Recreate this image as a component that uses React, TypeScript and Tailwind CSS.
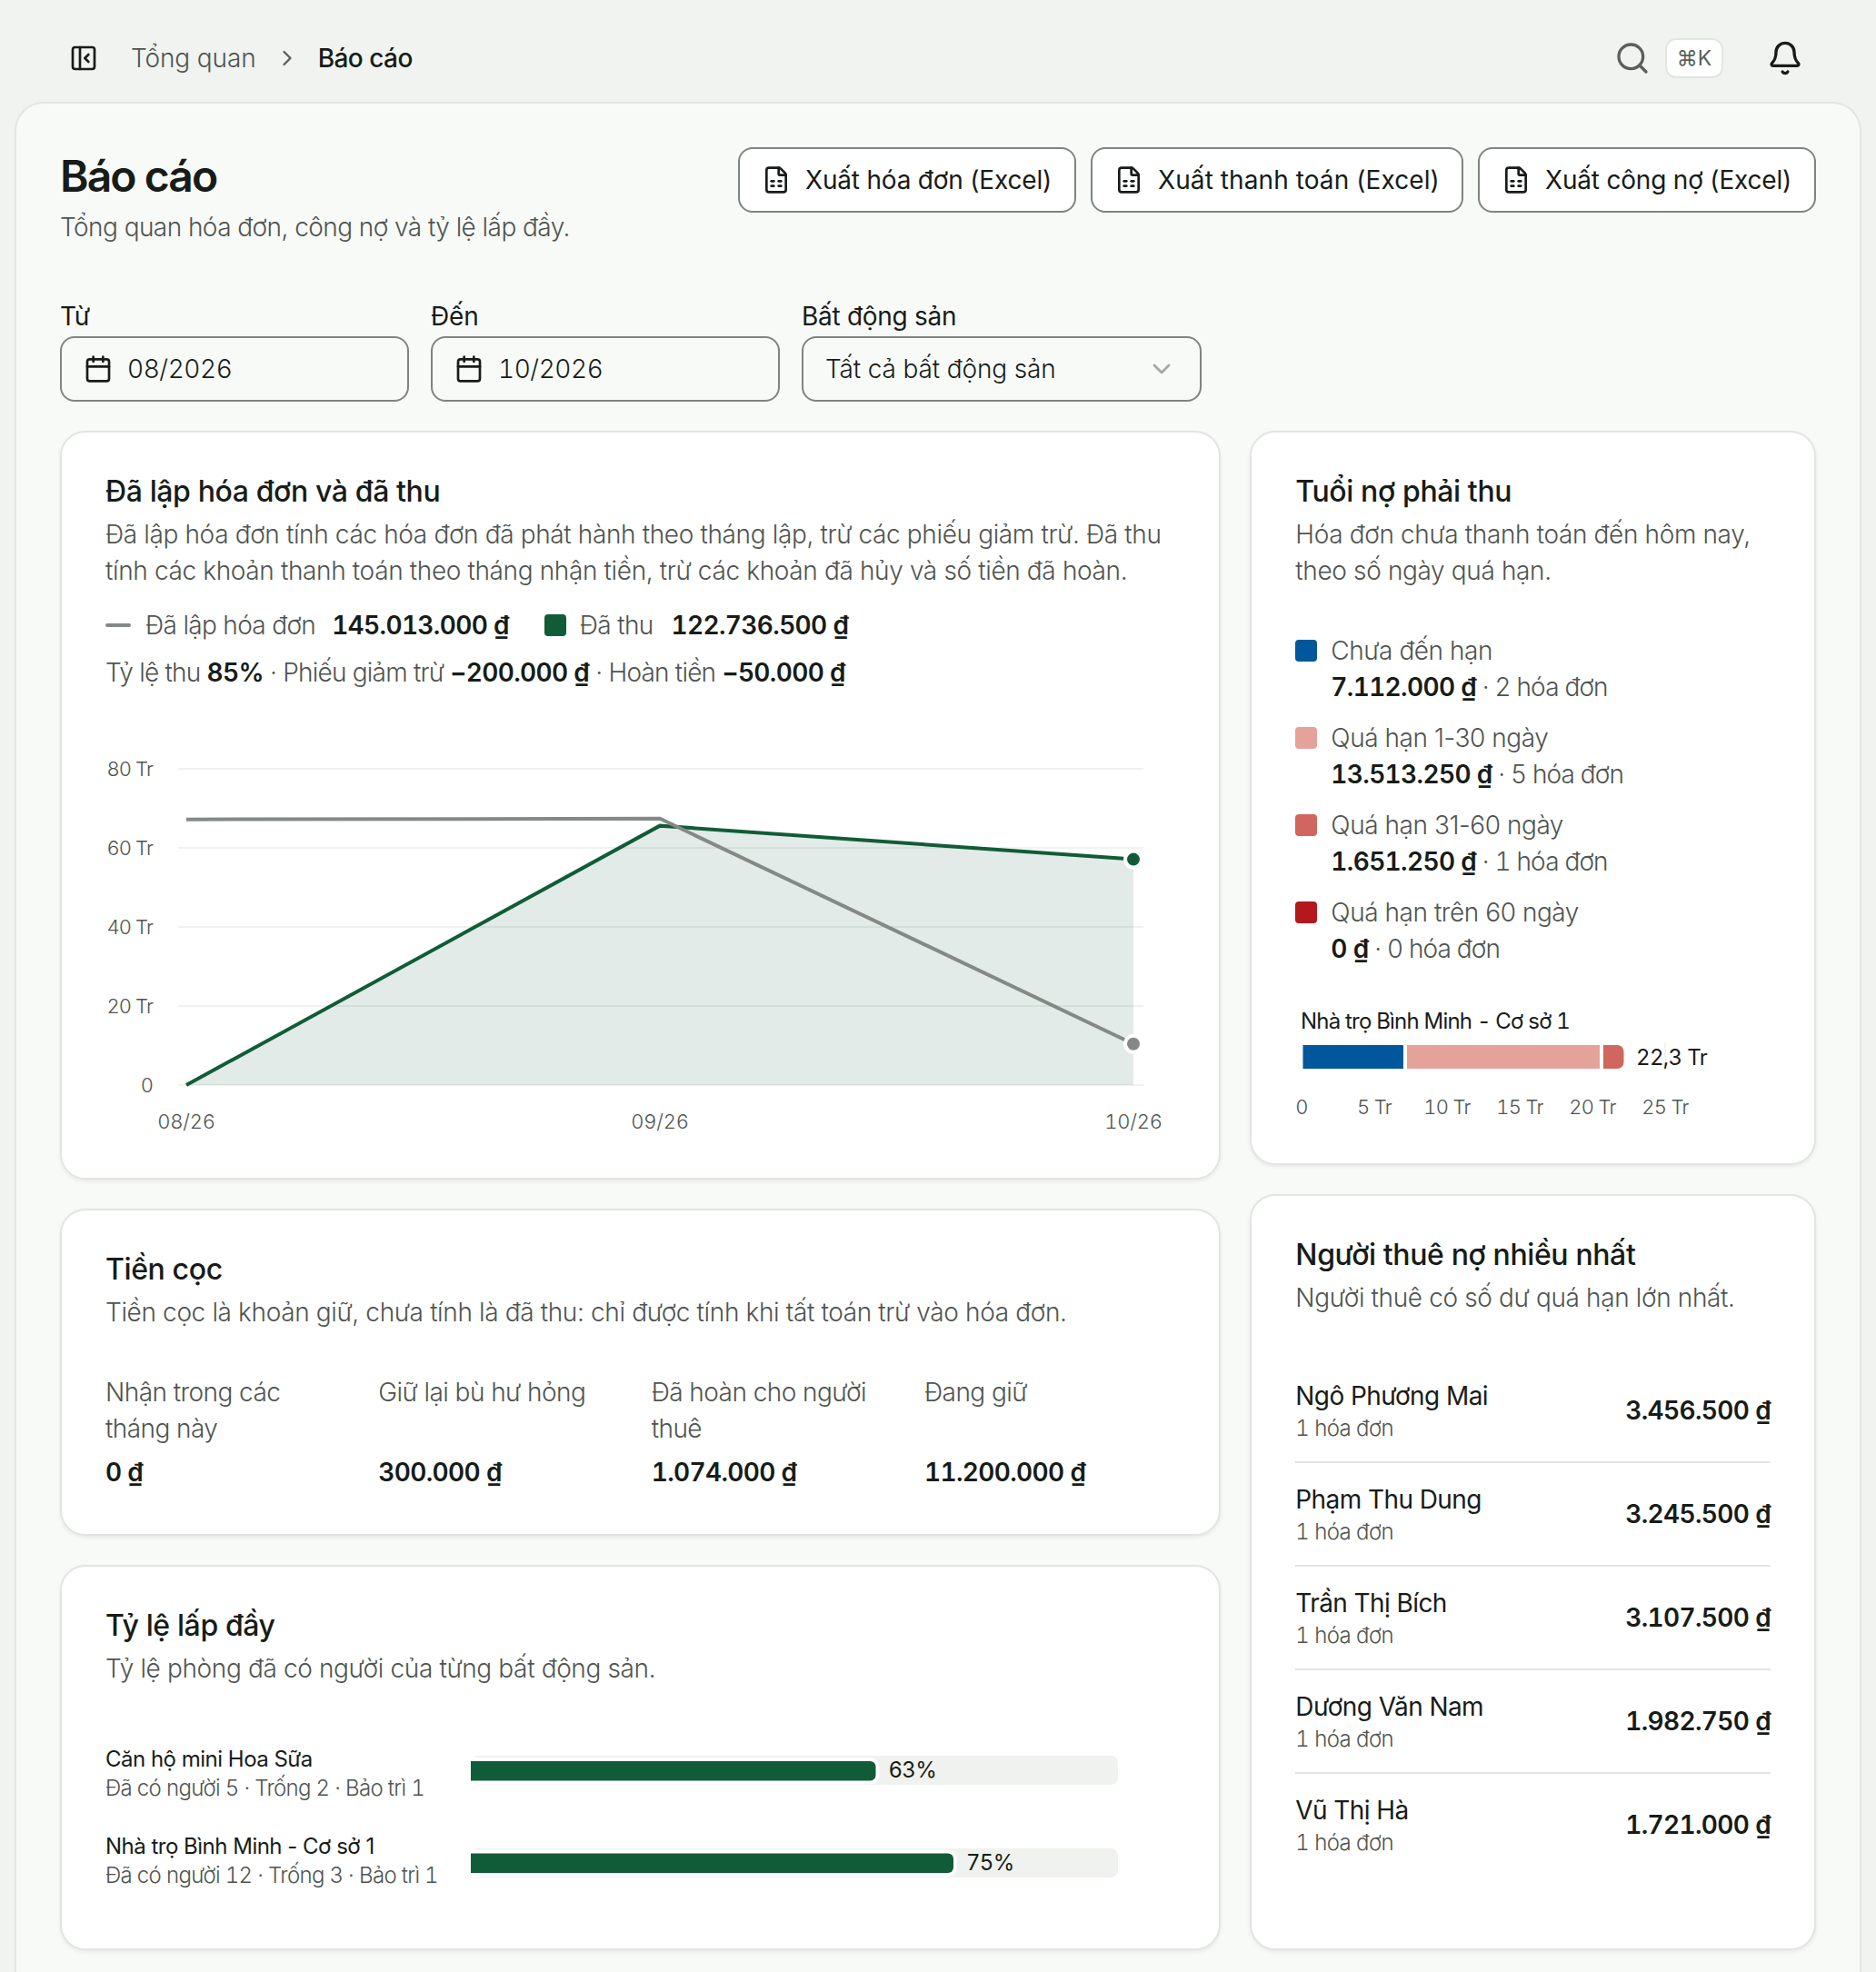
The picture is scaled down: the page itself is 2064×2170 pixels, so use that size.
import {
  Bell,
  Calendar,
  ChevronDown,
  ChevronRight,
  FileSpreadsheet,
  PanelLeftClose,
  Search,
} from 'lucide-react';
import type { ReactNode } from 'react';

const exportButtons = [
  { label: 'Xuất hóa đơn (Excel)', style: 'w-[372px] tracking-[-0.007em]' },
  { label: 'Xuất thanh toán (Excel)', style: 'w-[410px] tracking-[0.003em]' },
  { label: 'Xuất công nợ (Excel)', style: 'w-[372px] tracking-[-0.007em]' },
];

const deposits = [
  { label: 'Nhận trong các tháng này', value: '0 ₫' },
  { label: 'Giữ lại bù hư hỏng', value: '300.000 ₫' },
  { label: 'Đã hoàn cho người thuê', value: '1.074.000 ₫' },
  { label: 'Đang giữ', value: '11.200.000 ₫' },
];

const aging = [
  { label: 'Chưa đến hạn', value: '7.112.000 ₫', count: 2, color: 'bg-[#00579b]' },
  { label: 'Quá hạn 1-30 ngày', value: '13.513.250 ₫', count: 5, color: 'bg-[#e5a29b]' },
  { label: 'Quá hạn 31-60 ngày', value: '1.651.250 ₫', count: 1, color: 'bg-[#d1665e]' },
  { label: 'Quá hạn trên 60 ngày', value: '0 ₫', count: 0, color: 'bg-[#b3181d]' },
];

const debtors = [
  { name: 'Ngô Phương Mai', amount: '3.456.500 ₫' },
  { name: 'Phạm Thu Dung', amount: '3.245.500 ₫' },
  { name: 'Trần Thị Bích', amount: '3.107.500 ₫' },
  { name: 'Dương Văn Nam', amount: '1.982.750 ₫' },
  { name: 'Vũ Thị Hà', amount: '1.721.000 ₫' },
];

const occupancy = [
  { name: 'Căn hộ mini Hoa Sữa', detail: 'Đã có người 5 · Trống 2 · Bảo trì 1' },
  { name: 'Nhà trọ Bình Minh - Cơ sở 1', detail: 'Đã có người 12 · Trống 3 · Bảo trì 1' },
];

function Card({
  title,
  description,
  className = '',
  children,
}: {
  title: string;
  description: string;
  className?: string;
  children: ReactNode;
}) {
  return (
    <section
      className={`rounded-[28px] border-2 border-[#e2e5e2] bg-white p-12 shadow-[0_2px_4px_rgba(0,0,0,0.07)] ${className}`}
    >
      <h2 className="text-[32px] leading-[34px] font-medium tracking-[-0.012em]">{title}</h2>
      <p className="mt-2.5 text-[28px] leading-10 font-light tracking-[-0.013em] text-[#4f5450]">
        {description}
      </p>
      {children}
    </section>
  );
}

function Money({ children }: { children: ReactNode }) {
  return (
    <span className="font-semibold tracking-[-0.023em] text-[#171c18] tabular-nums">
      {children}
    </span>
  );
}

function DateField({ label, value }: { label: string; value: string }) {
  return (
    <div className="flex w-96 flex-col gap-0.5">
      <label className="leading-10 tracking-[-0.007em]">{label}</label>
      <div className="flex h-[72px] items-center gap-4 rounded-2xl border-2 border-[#7f8480] px-6">
        <Calendar size={32} />
        <span className="font-light tracking-[-0.016em] tabular-nums">{value}</span>
      </div>
    </div>
  );
}

function RevenueChart() {
  const y = (value: number) => 434 - value * 4.35;
  return (
    <svg
      width="1177"
      height="488"
      viewBox="0 0 1177 488"
      className="block text-[22px] font-light tabular-nums"
    >
      {[80, 60, 40, 20, 0].map((tick) => (
        <g key={tick}>
          <line x1="80" x2="1142" y1={y(tick)} y2={y(tick)} stroke="#f0f2f0" strokeWidth="2" />
          <text
            x="52"
            y={y(tick) + 8}
            textAnchor="end"
            fill="#4f5450"
            className="tracking-[-0.04em]"
          >
            {tick ? `${tick} Tr` : '0'}
          </text>
        </g>
      ))}
      <path
        d={`M89 434L610 ${y(65.6)}L1131 ${y(57.1)}V434Z`}
        fill="#115c38"
        fillOpacity="0.12"
      />
      <path
        d={`M89 434L610 ${y(65.6)}L1131 ${y(57.1)}`}
        fill="none"
        stroke="#115c38"
        strokeWidth="4"
      />
      <path
        d={`M89 ${y(67.2)}L610 ${y(67.4)}L1131 ${y(10.4)}`}
        fill="none"
        stroke="#858985"
        strokeWidth="4"
      />
      <circle cx="1131" cy={y(57.1)} r="9" fill="#115c38" stroke="#fff" strokeWidth="4" />
      <circle cx="1131" cy={y(10.4)} r="9" fill="#858985" stroke="#fff" strokeWidth="4" />
      <g textAnchor="middle" fill="#4f5450" className="tracking-[-0.01em]">
        <text x="89" y="482">08/26</text>
        <text x="610" y="482">09/26</text>
        <text x="1131" y="482">10/26</text>
      </g>
    </svg>
  );
}

function AgingChart() {
  return (
    <svg width="522" height="168" viewBox="0 0 522 168" className="block tabular-nums">
      <text x="6" y="68" className="text-[24px] tracking-[-0.033em]" fill="#171c18">
        Nhà trọ Bình Minh - Cơ sở 1
      </text>
      <line x1="407" x2="407" y1="84" y2="113" stroke="#f0f2f0" strokeWidth="2" />
      <rect x="8.5" y="86" width="110.5" height="26" fill="#00579b" />
      <rect x="123" y="86" width="212" height="26" fill="#e5a29b" />
      <path d="M339 86h15.5a7 7 0 0 1 7 7v12a7 7 0 0 1-7 7H339z" fill="#d1665e" />
      <text x="375" y="108" className="text-[24px] tracking-[-0.028em]" fill="#171c18">
        22,3 Tr
      </text>
      <g textAnchor="middle" fill="#4f5450" className="text-[22px] font-light tracking-[-0.03em]">
        {[0, 5, 10, 15, 20, 25].map((tick) => (
          <text key={tick} x={7 + tick * 16} y="162">
            {tick ? `${tick} Tr` : '0'}
          </text>
        ))}
      </g>
    </svg>
  );
}

function OccupancyChart() {
  const bars = [
    { y: 34, track: 28, width: 445.5, label: '63%' },
    { y: 135.5, track: 130, width: 531, label: '75%' },
  ];
  return (
    <svg width="777" height="192" viewBox="0 0 777 192" className="block">
      {bars.map((bar) => (
        <g key={bar.label}>
          <rect x="2" y={bar.track} width="712" height="32" rx="8" fill="#f0f2ef" />
          <path
            d={`M2 ${bar.y}h${bar.width - 6}a6 6 0 0 1 6 6v9.5a6 6 0 0 1-6 6H2z`}
            fill="#115c38"
            stroke="#fff"
            strokeWidth="8"
            paintOrder="stroke"
          />
          <text
            x={bar.width + 16}
            y={bar.track + 24}
            className="text-[24px] tracking-[-0.03em] tabular-nums"
            fill="#171c18"
          >
            {bar.label}
          </text>
        </g>
      ))}
    </svg>
  );
}

export default function App() {
  return (
    <div className="flex h-[2170px] w-[2064px] flex-col overflow-hidden bg-[#f0f3f0] font-['Inter',sans-serif] text-[28px] leading-10 text-[#171c18]">
      {/* top bar */}
      <header className="flex h-28 shrink-0 items-center justify-between pt-4 pr-20 pl-[76px]">
        <div className="flex items-center">
          <PanelLeftClose size={32} />
          <span className="ml-9 font-light tracking-[-0.004em] text-[#4f5450]">Tổng quan</span>
          <ChevronRight size={28} className="mx-5 text-[#5a5f5b]" />
          <span className="font-medium tracking-[-0.019em]">Báo cáo</span>
        </div>
        <div className="flex items-center">
          <Search size={40} className="text-[#5a5f5b]" />
          <kbd className="ml-4 flex h-11 w-16 items-center justify-center rounded-xl border-2 border-[#e2e5e2] bg-white font-['Inter','DejaVu_Sans',sans-serif] text-[23px] text-[#5a5f5b]">
            ⌘K
          </kbd>
          <Bell size={40} className="ml-12" />
        </div>
      </header>

      <main className="mx-4 grow rounded-t-[32px] border-2 border-b-0 border-[#e2e5e2] bg-[#f8faf8] px-12 pt-12">
        {/* heading */}
        <div className="flex items-start justify-between">
          <div>
            <h1 className="text-[48px] leading-[64px] font-semibold tracking-[-0.04em]">
              Báo cáo
            </h1>
            <p className="mt-1 font-light tracking-[-0.02em] text-[#4f5450]">
              Tổng quan hóa đơn, công nợ và tỷ lệ lấp đầy.
            </p>
          </div>
          <div className="flex gap-4">
            {exportButtons.map((button) => (
              <button
                key={button.label}
                className={`flex h-[72px] items-center gap-4 rounded-2xl border-2 border-[#7f8480] bg-white px-6 whitespace-nowrap ${button.style}`}
              >
                <FileSpreadsheet size={32} className="shrink-0" />
                {button.label}
              </button>
            ))}
          </div>
        </div>

        {/* filters */}
        <div className="mt-[58px] flex gap-6">
          <DateField label="Từ" value="08/2026" />
          <DateField label="Đến" value="10/2026" />
          <div className="flex w-[440px] flex-col gap-0.5">
            <label className="leading-10 tracking-[-0.01em]">Bất động sản</label>
            <div className="flex h-[72px] items-center justify-between rounded-2xl border-2 border-[#7f8480] pr-[26px] pl-6">
              <span className="font-light tracking-[-0.005em]">Tất cả bất động sản</span>
              <ChevronDown size={32} className="text-[#a3a7a4]" />
            </div>
          </div>
        </div>

        <div className="mt-8 grid grid-cols-3 gap-8">
          <div className="col-span-2 flex flex-col gap-8">
            {/* billed and collected */}
            <Card
              title="Đã lập hóa đơn và đã thu"
              description="Đã lập hóa đơn tính các hóa đơn đã phát hành theo tháng lập, trừ các phiếu giảm trừ. Đã thu tính các khoản thanh toán theo tháng nhận tiền, trừ các khoản đã hủy và số tiền đã hoàn."
              className="h-[824px]"
            >
              <div className="mt-5 flex items-center font-light tracking-[-0.024em] text-[#4f5450]">
                <span className="mr-4 h-1 w-7 rounded-full bg-[#858985]" />
                <span className="mr-[18px]">Đã lập hóa đơn</span>
                <Money>145.013.000 ₫</Money>
                <span className="mr-[15px] ml-[39px] size-6 rounded bg-[#115c38]" />
                <span className="mr-5">Đã thu</span>
                <Money>122.736.500 ₫</Money>
              </div>
              <p className="mt-3 font-light tracking-[-0.028em] text-[#4f5450]">
                Tỷ lệ thu <Money>85%</Money> · Phiếu giảm trừ <Money>−200.000 ₫</Money> · Hoàn
                tiền <Money>−50.000 ₫</Money>
              </p>
              <RevenueChart />
            </Card>

            {/* deposits */}
            <Card
              title="Tiền cọc"
              description="Tiền cọc là khoản giữ, chưa tính là đã thu: chỉ được tính khi tất toán trừ vào hóa đơn."
              className="h-[360px]"
            >
              <div className="mt-12 grid grid-cols-4 gap-6">
                {deposits.map((item) => (
                  <div key={item.label} className="flex flex-col justify-between gap-2">
                    <span className="pr-5 font-light tracking-[-0.02em] text-[#4f5450]">
                      {item.label}
                    </span>
                    <Money>{item.value}</Money>
                  </div>
                ))}
              </div>
            </Card>

            {/* occupancy */}
            <Card
              title="Tỷ lệ lấp đầy"
              description="Tỷ lệ phòng đã có người của từng bất động sản."
              className="h-[424px]"
            >
              <div className="mt-12 flex">
                <div className="w-[400px] shrink-0">
                  {occupancy.map((item) => (
                    <div
                      key={item.name}
                      className="flex h-24 flex-col justify-center text-2xl leading-8 whitespace-nowrap"
                    >
                      <span className="tracking-[-0.021em]">{item.name}</span>
                      <span className="font-light tracking-[-0.028em] text-[#4f5450] tabular-nums">
                        {item.detail}
                      </span>
                    </div>
                  ))}
                </div>
                <OccupancyChart />
              </div>
            </Card>
          </div>

          <div className="flex flex-col gap-8">
            {/* receivables aging */}
            <Card
              title="Tuổi nợ phải thu"
              description="Hóa đơn chưa thanh toán đến hôm nay, theo số ngày quá hạn."
              className="h-[808px]"
            >
              <div className="mt-12 flex flex-col gap-4">
                {aging.map((item) => (
                  <div
                    key={item.label}
                    className="flex gap-[15px] font-light tracking-[-0.016em] text-[#4f5450]"
                  >
                    <span className={`mt-2 size-6 rounded ${item.color}`} />
                    <div>
                      <p>{item.label}</p>
                      <p className="tracking-[-0.03em] tabular-nums">
                        <Money>{item.value}</Money> · {item.count} hóa đơn
                      </p>
                    </div>
                  </div>
                ))}
              </div>
              <AgingChart />
            </Card>

            {/* top debtors */}
            <Card
              title="Người thuê nợ nhiều nhất"
              description="Người thuê có số dư quá hạn lớn nhất."
              className="grow"
            >
              <ul className="mt-12 divide-y-2 divide-[#e2e4e2]">
                {debtors.map((item) => (
                  <li key={item.name} className="flex items-center justify-between py-5">
                    <div>
                      <p className="tracking-[-0.021em]">{item.name}</p>
                      <p className="text-2xl leading-8 font-light tracking-[-0.024em] text-[#4f5450] tabular-nums">
                        1 hóa đơn
                      </p>
                    </div>
                    <Money>{item.amount}</Money>
                  </li>
                ))}
              </ul>
            </Card>
          </div>
        </div>
      </main>
    </div>
  );
}
